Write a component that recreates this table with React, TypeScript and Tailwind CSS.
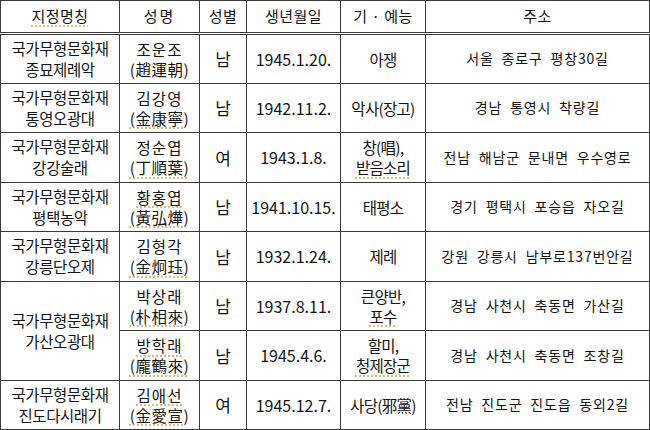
type Row = {
  title?: [string, string];
  span?: number;
  name: string;
  hanja: string;
  sex: string;
  born: string;
  art: [string, string?];
  addr: string;
  ul?: { name?: boolean; hanja?: boolean; art?: boolean };
};

const rows: Row[] = [
  { title: ['국가무형문화재', '종묘제례악'], name: '조운조', hanja: '(趙運朝)', sex: '남', born: '1945.1.20.', art: ['아쟁'], addr: '서울 종로구 평창30길' },
  { title: ['국가무형문화재', '통영오광대'], name: '김강영', hanja: '(金康寧)', sex: '남', born: '1942.11.2.', art: ['악사(장고)'], addr: '경남 통영시 착량길', ul: { hanja: true } },
  { title: ['국가무형문화재', '강강술래'], name: '정순엽', hanja: '(丁順葉)', sex: '여', born: '1943.1.8.', art: ['창(唱),', '받음소리'], addr: '전남 해남군 문내면 우수영로', ul: { hanja: true, art: true } },
  { title: ['국가무형문화재', '평택농악'], name: '황홍엽', hanja: '(黃弘燁)', sex: '남', born: '1941.10.15.', art: ['태평소'], addr: '경기 평택시 포승읍 자오길', ul: { name: true, hanja: true } },
  { title: ['국가무형문화재', '강릉단오제'], name: '김형각', hanja: '(金炯珏)', sex: '남', born: '1932.1.24.', art: ['제례'], addr: '강원 강릉시 남부로137번안길', ul: { hanja: true } },
  { title: ['국가무형문화재', '가산오광대'], span: 2, name: '박상래', hanja: '(朴相來)', sex: '남', born: '1937.8.11.', art: ['큰양반,', '포수'], addr: '경남 사천시 축동면 가산길', ul: { hanja: true, art: true } },
  { name: '방학래', hanja: '(龐鶴來)', sex: '남', born: '1945.4.6.', art: ['할미,', '청제장군'], addr: '경남 사천시 축동면 조창길', ul: { name: true, hanja: true, art: true } },
  { title: ['국가무형문화재', '진도다시래기'], name: '김애선', hanja: '(金愛宣)', sex: '여', born: '1945.12.7.', art: ['사당(邪黨)'], addr: '전남 진도군 진도읍 동외2길', ul: { name: true, hanja: true } },
];

const spell = 'underline decoration-dotted decoration-[#d9a55e] underline-offset-[3px]';
const cell = 'border border-[#3a3a3a] text-center align-middle p-0';
const head = `${cell} font-normal border-b-[3px] border-double`;

function Mark({ on, children }: { on?: boolean; children: React.ReactNode }) {
  return <span className={on ? spell : ''}>{children}</span>;
}

export default function App() {
  return (
    <div className="w-[650px] h-[430px] bg-white text-[#141414] [font-family:'Noto_Sans_CJK_KR','Noto_Sans',sans-serif] overflow-hidden">
      <table className="w-[650px] table-fixed border-collapse">
        <colgroup>
          <col className="w-[119px]" />
          <col className="w-[80px]" />
          <col className="w-[47px]" />
          <col className="w-[94px]" />
          <col className="w-[85px]" />
          <col />
        </colgroup>
        <thead>
          <tr className="h-[33px] text-[15px] tracking-[0.5px]">
            <th className={head}>
              <span className={spell}>지정명칭</span>
            </th>
            <th className={`${head} tracking-[2px]`}>성명</th>
            <th className={head}>성별</th>
            <th className={head}>생년월일</th>
            <th className={head}>기 · 예능</th>
            <th className={head}>주소</th>
          </tr>
        </thead>
        <tbody>
          {rows.map((r, i) => (
            <tr key={i} className="h-[49.5px]">
              {r.title && (
                <td rowSpan={r.span ?? 1} className={`${cell} text-[15.5px] leading-[21px] tracking-[-0.4px]`}>
                  <div>{r.title[0]}</div>
                  <div>{r.title[1]}</div>
                </td>
              )}
              <td className={`${cell} text-[15.5px] leading-[20px]`}>
                <div className="tracking-[1px]">
                  <Mark on={r.ul?.name}>{r.name}</Mark>
                </div>
                <div className="tracking-[0.5px]">
                  <Mark on={r.ul?.hanja}>{r.hanja}</Mark>
                </div>
              </td>
              <td className={`${cell} text-[17px]`}>{r.sex}</td>
              <td className={`${cell} text-[16px]`}>{r.born}</td>
              <td className={`${cell} text-[15.5px] leading-[20px] tracking-[-0.7px]`}>
                <div>{r.art[0]}</div>
                {r.art[1] && (
                  <div>
                    <Mark on={r.ul?.art}>{r.art[1]}</Mark>
                  </div>
                )}
              </td>
              <td className={`${cell} text-[14px] tracking-[0.8px] [word-spacing:4px]`}>{r.addr}</td>
            </tr>
          ))}
        </tbody>
      </table>
    </div>
  );
}
